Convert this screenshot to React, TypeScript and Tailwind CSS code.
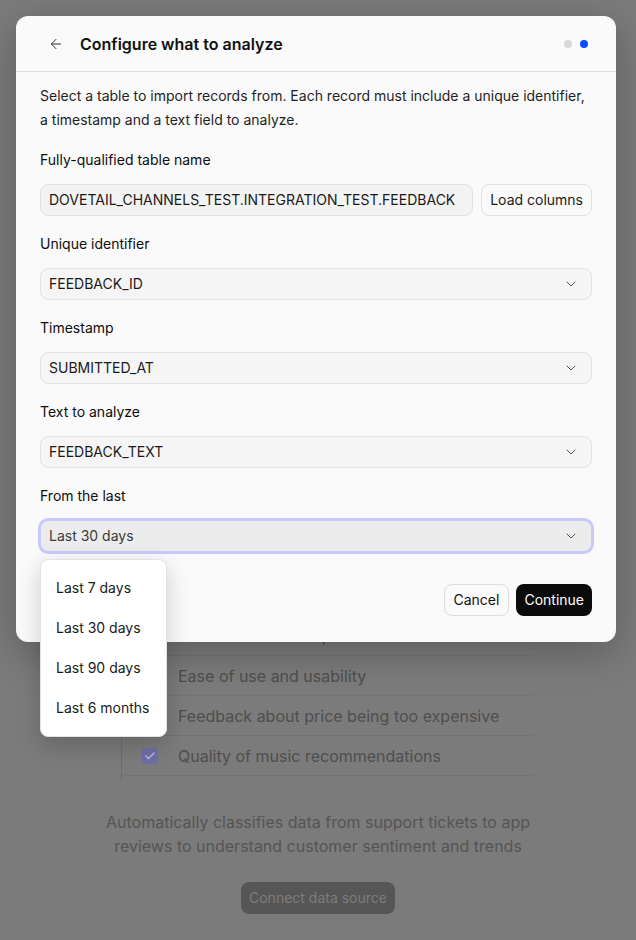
import { ArrowLeft, ChevronDown, Check } from "lucide-react";

const fields = [
    { label: "Unique identifier", value: "FEEDBACK_ID" },
    { label: "Timestamp", value: "SUBMITTED_AT" },
    { label: "Text to analyze", value: "FEEDBACK_TEXT" },
];

const topics = [
    "Performance and speed",
    "Ease of use and usability",
    "Feedback about price being too expensive",
    "Quality of music recommendations",
];

const ranges = ["Last 7 days", "Last 30 days", "Last 90 days", "Last 6 months"];

function SelectBox({ value }: { value: string }) {
    return (
        <div className="h-8 flex items-center justify-between pl-2 pr-3 rounded-lg border border-[#e2e2e2] bg-[#f5f5f5] text-sm text-[#1a1a1a]">
            <span>{value}</span>
            <ChevronDown className="w-4 h-4 text-[#555]" strokeWidth={1.5} />
        </div>
    );
}

export default function App() {
    return (
        <div
            className="relative w-[636px] h-[940px] overflow-hidden bg-[#7b7b7b]"
            style={{ fontFamily: "Inter, 'Noto Sans', sans-serif" }}
        >
            {/* Dimmed page underneath */}
            <div className="pt-[616px] flex flex-col items-center">
                <div className="self-start ml-[121px] w-[412px] border-l border-[#6e6e6e] pb-[5px]">
                    {topics.map((t, i) => (
                        <div key={t} className="h-10 flex items-center border-b border-[#737373]">
                            <div className="w-[56px] flex justify-center">
                                {i === 3 && (
                                    <div className="w-4 h-4 rounded-[4px] bg-[#6d6ea6] flex items-center justify-center">
                                        <Check className="w-3 h-3 text-[#b8b9d6]" strokeWidth={3} />
                                    </div>
                                )}
                            </div>
                            <span className="text-base text-[#4e4e4e]">{t}</span>
                        </div>
                    ))}
                </div>
                <p className="mt-[29px] w-[460px] text-center text-base leading-6 text-[#555]">
                    Automatically classifies data from support tickets to app reviews to understand customer sentiment and trends
                </p>
                <button className="mt-6 h-8 px-2 rounded-lg bg-[#565656] text-sm text-[#7c7c7c]">
                    Connect data source
                </button>
            </div>

            {/* Dialog */}
            <div className="absolute left-4 top-4 w-[600px] rounded-xl bg-[#fafafa] shadow-[0_10px_40px_rgba(0,0,0,0.25)]">
                <div className="h-14 flex items-center justify-between pl-6 pr-7 border-b border-[#dcdcdc]">
                    <div className="flex items-center gap-2">
                        <button className="w-8 h-8 flex items-center justify-center text-[#333]">
                            <ArrowLeft className="w-4 h-4" strokeWidth={1.5} />
                        </button>
                        <h2 className="text-base font-semibold text-[#111] pt-px">Configure what to analyze</h2>
                    </div>
                    <div className="flex items-center gap-2">
                        <span className="w-2 h-2 rounded-full bg-[#d9d9d9]" />
                        <span className="w-2 h-2 rounded-full bg-[#0a4bff]" />
                    </div>
                </div>

                <div className="px-6 pt-3 pb-[26px]">
                    <p className="text-sm leading-6 text-[#1f1f1f]">
                        Select a table to import records from. Each record must include a unique identifier, a timestamp and a text field to analyze.
                    </p>

                    <div className="mt-4 flex flex-col gap-4">
                        <div>
                            <label className="block text-sm leading-6 text-[#0d0d0d] mb-3">Fully-qualified table name</label>
                            <div className="flex gap-2">
                                <div className="flex-1 h-8 flex items-center px-2 rounded-lg border border-[#e2e2e2] bg-[#f3f3f3] text-sm text-[#1a1a1a]">
                                    DOVETAIL_CHANNELS_TEST.INTEGRATION_TEST.FEEDBACK
                                </div>
                                <button className="h-8 px-2 rounded-lg border border-[#e2e2e2] bg-[#fafafa] text-sm text-[#1a1a1a]">
                                    Load columns
                                </button>
                            </div>
                        </div>

                        {fields.map((f) => (
                            <div key={f.label}>
                                <label className="block text-sm leading-6 text-[#0d0d0d] mb-3">{f.label}</label>
                                <SelectBox value={f.value} />
                            </div>
                        ))}

                        <div className="relative">
                            <label className="block text-sm leading-6 text-[#0d0d0d] mb-3">From the last</label>
                            <div className="h-8 flex items-center justify-between pl-2 pr-3 rounded-lg border border-[#c9c9fb] bg-[#ececec] ring-2 ring-[#c9c9fb] text-sm text-[#3a3a3a]">
                                <span>Last 30 days</span>
                                <ChevronDown className="w-4 h-4 text-[#555]" strokeWidth={1.5} />
                            </div>

                            {/* Open menu */}
                            <div className="absolute left-0 top-[75px] z-10 w-[127px] py-2 rounded-lg bg-white border border-[#e3e3e3] shadow-[0_8px_24px_rgba(0,0,0,0.18)]">
                                {ranges.map((r) => (
                                    <div key={r} className="h-10 flex items-center px-[15px] whitespace-nowrap text-sm text-[#1a1a1a]">
                                        {r}
                                    </div>
                                ))}
                            </div>
                        </div>
                    </div>

                    <div className="mt-8 flex justify-end gap-[7px]">
                        <button className="h-8 px-[9px] rounded-lg border border-[#dedede] bg-[#fafafa] text-sm text-[#111]">
                            Cancel
                        </button>
                        <button className="h-8 px-2 rounded-lg bg-[#0b0b0b] text-sm text-white">
                            Continue
                        </button>
                    </div>
                </div>
            </div>
        </div>
    );
}
